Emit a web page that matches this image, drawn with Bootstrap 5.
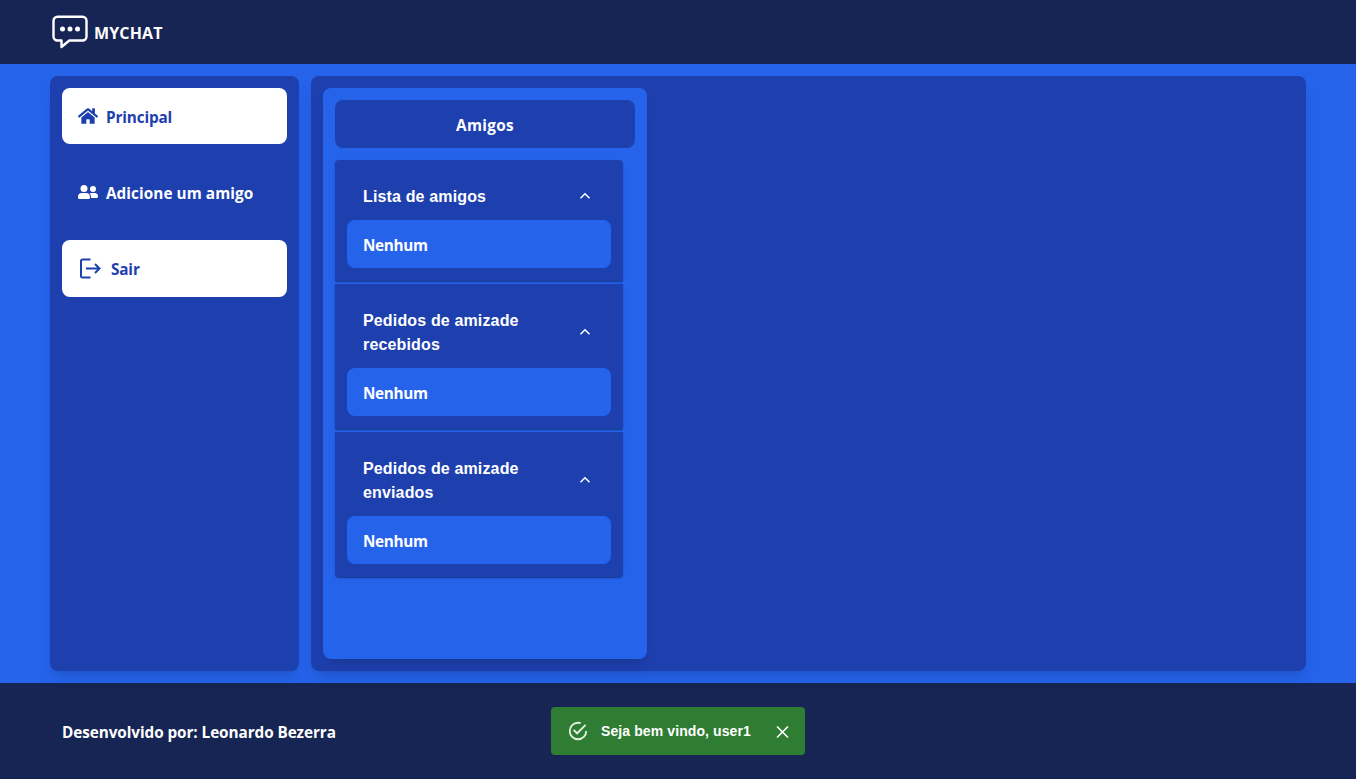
<!DOCTYPE html>
<html lang="pt-BR">
<head>
<meta charset="utf-8">
<meta name="viewport" content="width=device-width, initial-scale=1">
<title>MyChat</title>
<link href="https://cdn.jsdelivr.net/npm/bootstrap@5.3.0/dist/css/bootstrap.min.css" rel="stylesheet">
<style>
body{background:#172554;color:#fff;font-family:"Open Sans","Noto Sans",sans-serif;font-weight:700;font-size:15.300px;line-height:24px;overflow:hidden}
.topbar{height:64px;padding-left:50px;background:#172554}
.brand-name{padding-top:2px;margin-left:4px;font-size:16px;letter-spacing:.15px}
.stage{background:#2563eb;padding:12px 50px;gap:12px}
.panel{background:#1e40af;border-radius:8px;padding:12px;box-shadow:0 10px 15px -3px rgba(0,0,0,.1),0 4px 6px -4px rgba(0,0,0,.1)}
.side{width:249px;gap:20px}
.side-link{height:56px;border-radius:8px;padding:0 16px;color:#fff;text-decoration:none;letter-spacing:.07px}
.side-link.lit{background:#fff;color:#1e40af;letter-spacing:-.15px}
.side-link.exit{height:57px}
.side-link span{padding-top:2px}
.side-link.exit span{padding-top:1px}
.friends{width:324px;background:#2563eb}
.heading{height:48px;border-radius:8px;background:#1e40af;padding-top:2px;letter-spacing:.3px}
.group-list{margin:12px 12px 0 0}
.group-box{background:#1e40af;padding:12px 12px 13px;margin-bottom:3px;box-shadow:0 2px 1px -1px rgba(0,0,0,.2),0 1px 1px rgba(0,0,0,.14),0 1px 3px rgba(0,0,0,.12)}
.group-box:first-child{border-radius:4px 4px 0 0}
.group-box:last-child{border-radius:0 0 4px 4px}
.group-head{padding:12px 16px;font-family:"Liberation Sans",Arial,sans-serif;font-size:16px;letter-spacing:.15px}
.group-head span{width:190px;padding-top:1px;margin-bottom:-1px}
.none-item{height:48px;border-radius:8px;background:#2563eb;padding:2px 16px 0;letter-spacing:-.35px}
.foot{height:96px;padding:2px 62px 0}
.credit{letter-spacing:-.07px}
.notice{bottom:24px;left:551px;width:254px;height:48px;border-radius:4px;background:#2e7d32;padding:0 15.500px;font-family:"Liberation Sans",Arial,sans-serif;font-size:14px;letter-spacing:.1px}
.notice-text{margin-left:12.500px}
</style>
</head>
<body>
<div class="d-flex flex-column vh-100">
  <header class="topbar d-flex align-items-center">
    <svg width="40" height="40" viewBox="0 0 40 40" fill="none" stroke="#fff" stroke-width="2.400" stroke-linejoin="round"><path d="M7.500 4.700h25a4 4 0 0 1 4 4v15.800a4 4 0 0 1-4 4H19.300L11.500 35v-6.500H7.500a4 4 0 0 1-4-4V8.700a4 4 0 0 1 4-4z"/><g fill="#fff" stroke="none"><circle cx="12.500" cy="17" r="2.500"/><circle cx="20" cy="17" r="2.500"/><circle cx="27.500" cy="17" r="2.500"/></g></svg>
    <span class="brand-name">MYCHAT</span>
  </header>
  <main class="stage d-flex flex-grow-1">
    <nav class="panel side d-flex flex-column">
      <a href="#" class="side-link lit d-flex align-items-center"><svg width="20" height="18" viewBox="0 0 576 512" fill="currentColor"><path d="M280.370 148.260L96 300.110V464a16 16 0 0 0 16 16l112.060-.290a16 16 0 0 0 15.920-16V368a16 16 0 0 1 16-16h64a16 16 0 0 1 16 16v95.640a16 16 0 0 0 16 16.050L464 480a16 16 0 0 0 16-16V300L295.670 148.260a12.190 12.190 0 0 0-15.300 0zM571.600 251.470L488 182.560V44.050a12 12 0 0 0-12-12h-56a12 12 0 0 0-12 12v72.610L318.470 43a48 48 0 0 0-61 0L4.340 251.470a12 12 0 0 0-1.600 16.900l25.500 31A12 12 0 0 0 45.150 301l235.220-193.740a12.190 12.190 0 0 1 15.300 0L530.900 301a12 12 0 0 0 16.900-1.600l25.500-31a12 12 0 0 0-1.700-16.930z"/></svg><span class="ms-2">Principal</span></a>
      <a href="#" class="side-link d-flex align-items-center"><svg width="20" height="18" viewBox="0 0 20 18" fill="currentColor"><circle cx="6" cy="5.500" r="3.500"/><circle cx="15" cy="6" r="3"/><path d="M4 10h4a4 4 0 0 1 4 4v.5a1.500 1.500 0 0 1-1.500 1.500h-9A1.500 1.500 0 0 1 0 14.500V14a4 4 0 0 1 4-4zM13 10h3.500a3.500 3.500 0 0 1 3.500 3.500A1.500 1.500 0 0 1 18.500 15H13v-1a5 5 0 0 0-1.300-3.500q.6-.5 1.300-.5z"/></svg><span class="ms-2">Adicione um amigo</span></a>
      <a href="#" class="side-link lit exit d-flex align-items-center"><svg width="25" height="24" viewBox="0 0 25 24" fill="none" stroke="currentColor" stroke-width="2"><path d="M12.500 2.500H4.500a1.500 1.500 0 0 0-1.500 1.500v15A1.500 1.500 0 0 0 4.500 20.500h8M8 11.500h13.500M17 7L21.500 11.500l-4.500 4.500"/></svg><span class="ms-2">Sair</span></a>
    </nav>
    <section class="panel flex-grow-1 d-flex">
      <div class="panel friends">
        <div class="heading d-flex align-items-center justify-content-center">Amigos</div>
        <div class="group-list">
          <div class="group-box">
            <div class="group-head d-flex align-items-center justify-content-between"><span>Lista de amigos</span><svg class="me-1" width="12" height="8" viewBox="0 0 12 8" fill="none" stroke="#fff" stroke-width="1.500"><path d="M1.500 6.200L6 1.700l4.500 4.500"/></svg></div>
            <div class="none-item d-flex align-items-center">Nenhum</div>
          </div>
          <div class="group-box">
            <div class="group-head d-flex align-items-center justify-content-between"><span>Pedidos de amizade recebidos</span><svg class="me-1" width="12" height="8" viewBox="0 0 12 8" fill="none" stroke="#fff" stroke-width="1.500"><path d="M1.500 6.200L6 1.700l4.500 4.500"/></svg></div>
            <div class="none-item d-flex align-items-center">Nenhum</div>
          </div>
          <div class="group-box">
            <div class="group-head d-flex align-items-center justify-content-between"><span>Pedidos de amizade enviados</span><svg class="me-1" width="12" height="8" viewBox="0 0 12 8" fill="none" stroke="#fff" stroke-width="1.500"><path d="M1.500 6.200L6 1.700l4.500 4.500"/></svg></div>
            <div class="none-item d-flex align-items-center">Nenhum</div>
          </div>
        </div>
      </div>
    </section>
  </main>
  <footer class="foot d-flex align-items-center"><span class="credit">Desenvolvido por: Leonardo Bezerra</span></footer>
</div>
<div class="notice position-fixed d-flex align-items-center" role="alert">
  <svg width="22" height="22" viewBox="0 0 24 24" fill="#e4f0e4"><path d="M20 12a8 8 0 0 1-8 8 8 8 0 0 1-8-8 8 8 0 0 1 8-8c.76 0 1.500.11 2.200.31l1.570-1.570A9.820 9.820 0 0 0 12 2 10 10 0 0 0 2 12a10 10 0 0 0 10 10 10 10 0 0 0 10-10M7.910 10.080L6.500 11.500 11 16 21 6l-1.410-1.420L11 13.170l-3.090-3.090z"/></svg>
  <span class="notice-text me-auto">Seja bem vindo, user1</span>
  <svg class="mt-1" width="14" height="14" viewBox="0 0 14 14" stroke="#fff" stroke-width="1.600"><path d="M1 .5l11 11M12 .5l-11 11"/></svg>
</div>
<script src="https://cdn.jsdelivr.net/npm/bootstrap@5.3.0/dist/js/bootstrap.bundle.min.js"></script>
</body>
</html>
